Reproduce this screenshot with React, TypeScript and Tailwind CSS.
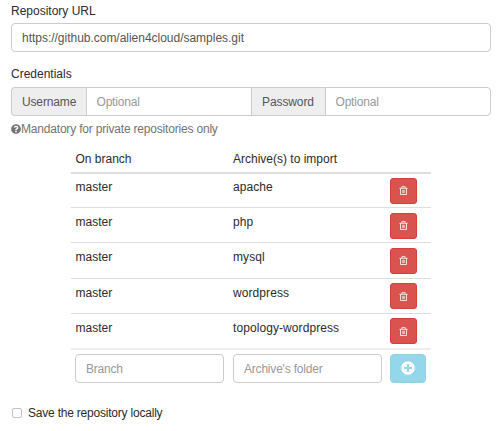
import React from "react";
import { FaPlusCircle, FaQuestionCircle } from "react-icons/fa";

const archives = ["apache", "php", "mysql", "wordpress", "topology-wordpress"];

const inputClass =
  "block h-[29px] min-w-0 border border-[#ccc] bg-white text-[12px] text-[#555] outline-none placeholder:text-[#999] placeholder:tracking-[-0.2px] placeholder:opacity-100";

function TrashIcon() {
  return (
    <svg className="h-[9px] w-[9px]" viewBox="0 0 9 9" fill="none" stroke="#fff" strokeOpacity="0.9" strokeWidth="0.9">
      <path d="M0.4 2.3H8.6M2.9 2.1V0.6H6.1V2.1M1.5 2.3V8.5H7.5V2.3" />
      <path d="M3.4 3.8V7.2M4.5 3.8V7.2M5.6 3.8V7.2" strokeWidth="0.65" />
    </svg>
  );
}

export default function App() {
  return (
    <div className="h-[431px] w-[500px] overflow-hidden bg-white pl-[11px] pr-[9px] font-['Liberation_Sans',Arial,sans-serif] text-[12px] leading-[17px] text-[#2b2b2b]">
      <div className="h-[23px] pt-[3px]">Repository URL</div>
      <input className={`${inputClass} w-full rounded-[4px] px-2.5 tracking-[-0.02px]`} defaultValue="https://github.com/alien4cloud/samples.git" />

      <div className="mt-[14px] h-[21px]">Credentials</div>
      <div className="flex h-[29px]">
        <span className="flex w-[75px] items-center rounded-l-[4px] border border-r-0 border-[#ccc] bg-[#eee] pl-2.5 pt-px tracking-[-0.15px] text-[#555]">Username</span>
        <input className={`${inputClass} w-[166px] px-[9.5px]`} placeholder="Optional" />
        <span className="flex w-[73px] items-center border-y border-[#ccc] bg-[#eee] pl-2.5 pt-px tracking-[-0.1px] text-[#555]">Password</span>
        <input className={`${inputClass} flex-1 rounded-r-[4px] px-[9.5px]`} placeholder="Optional" />
      </div>
      <div className="mt-[5px] flex h-[17px] items-center text-[#737373]">
        <FaQuestionCircle className="mb-px size-[10px] shrink-0" />
        <span className="whitespace-nowrap tracking-[-0.19px]">Mandatory for private repositories only</span>
      </div>

      <div className="ml-[60px] mt-[13px] w-[360px]">
        <div className="flex h-[21px] pl-[4.5px]">
          <span className="w-[157.5px]">On branch</span>
          <span>Archive(s) to import</span>
        </div>
        {archives.map((archive, index) => (
          <div
            key={archive}
            className={`flex h-[35.2px] border-[#ddd] pl-[4.5px] ${index === 0 ? "border-t-2" : "border-t"}`}
          >
            <span className={`w-[157.5px] ${index === 0 ? "pt-[5px]" : "pt-[6px]"}`}>master</span>
            <span className={`w-[157px] tracking-[0.08px] ${index === 0 ? "pt-[5px]" : "pt-[6px]"}`}>
              {archive}
            </span>
            <button
              className={`flex h-[26px] w-[27px] items-center justify-center rounded-[3px] border border-[#d43f3a] bg-[#d9534f] ${index === 0 ? "mt-[3.5px]" : "mt-[4.5px]"}`}
              aria-label="Delete"
            >
              <TrashIcon />
            </button>
          </div>
        ))}
        <div className="flex border-t-2 border-[#eee] pl-[4px] pt-1">
          <input className={`${inputClass} mr-[9px] w-[149px] rounded-[4px] px-2.5 pt-px`} placeholder="Branch" />
          <input className={`${inputClass} mr-[8px] w-[149px] rounded-[4px] px-2.5 pt-px`} placeholder="Archive's folder" />
          <button className="flex h-[29px] w-[36px] items-center justify-center rounded-[4px] border border-[#90d1e6] bg-[#94d6ea] text-white" aria-label="Add">
            <FaPlusCircle className="size-[14px]" />
          </button>
        </div>
      </div>

      <label className="mt-[22px] flex h-[17px] items-center tracking-[-0.21px]">
        <input type="checkbox" className="ml-px mr-[6px] size-[10px] appearance-none rounded-[2px] border border-[#c4c4c4] bg-white" />
        Save the repository locally
      </label>
    </div>
  );
}
